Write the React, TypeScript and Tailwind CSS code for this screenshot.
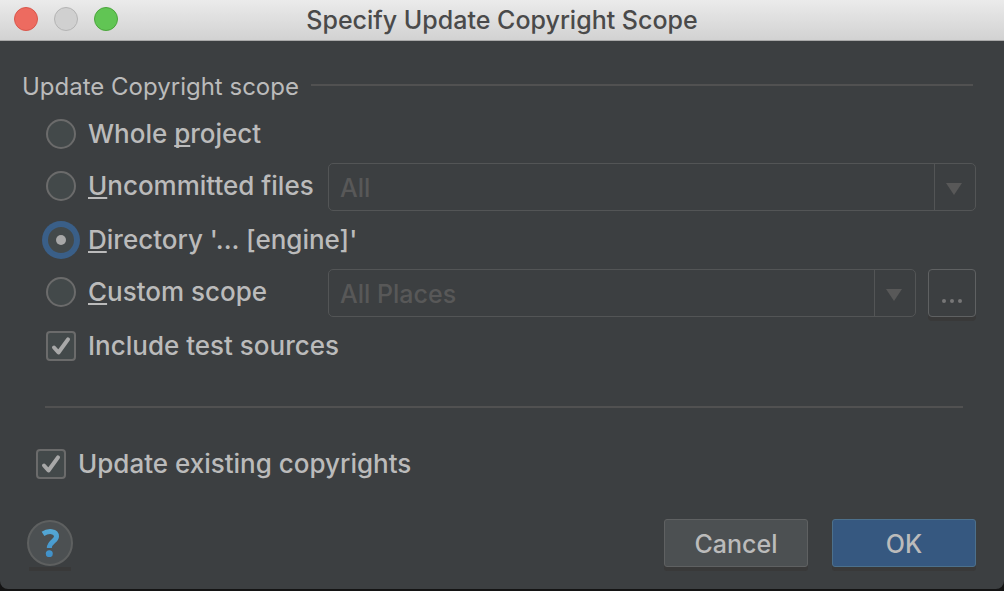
import { useState, type ReactNode } from "react";

const BORDER = "border-[#5f6162]";

function Mnemonic({ children }: { children: ReactNode }) {
  return (
    <span className="underline decoration-2 underline-offset-2 [text-decoration-skip-ink:none]">
      {children}
    </span>
  );
}

function ScopeRadio(props: {
  value: string;
  scope: string;
  onSelect: (value: string) => void;
  children: ReactNode;
}) {
  return (
    <label className="flex items-center gap-3 text-[26px] leading-[30px] font-medium">
      <input
        type="radio"
        name="scope"
        value={props.value}
        checked={props.scope === props.value}
        onChange={() => props.onSelect(props.value)}
        className="grid size-[30px] shrink-0 appearance-none place-items-center rounded-full border-2 border-[#6b6b6b] bg-[#43494a] outline-none before:size-2.5 before:rounded-full checked:border-[#3a5f88] checked:shadow-[0_0_0_4px_#3a5f88] checked:before:bg-[#a8a8a8]"
      />
      <span>{props.children}</span>
    </label>
  );
}

function CheckOption({ children }: { children: ReactNode }) {
  return (
    <label className="flex items-center gap-3 text-[26px] leading-[30px] font-medium">
      <span className="grid size-[30px] shrink-0">
        <input
          type="checkbox"
          defaultChecked
          className="peer col-start-1 row-start-1 size-[30px] appearance-none rounded border-2 border-[#6b6b6b] bg-[#43494a]"
        />
        <svg
          viewBox="0 0 30 30"
          aria-hidden="true"
          className="pointer-events-none invisible col-start-1 row-start-1 size-[30px] fill-none stroke-[#a8a8a8] peer-checked:visible"
        >
          <path d="M8 16.500 12.500 21.500 22 8.300" strokeWidth="4" strokeLinecap="round" strokeLinejoin="round" />
        </svg>
      </span>
      <span>{children}</span>
    </label>
  );
}

function ScopeSelect({ label, option }: { label: string; option: string }) {
  return (
    <div className="grid h-12 min-w-0 flex-1 grid-cols-[1fr_41px] rounded-[5px] border border-[#535556]">
      <select
        aria-label={label}
        disabled
        className="col-span-2 col-start-1 row-start-1 h-full w-full appearance-none bg-transparent px-[11px] pt-0.5 font-medium text-[#585858] opacity-100"
      >
        <option>{option}</option>
      </select>
      <span className="pointer-events-none col-start-2 row-start-1 grid place-items-center border-l border-[#535556] pt-1 pr-0.5">
        <svg viewBox="0 0 16 12" aria-hidden="true" className="h-3 w-4 fill-[#585858]">
          <path d="M0 0H16L8 12Z" />
        </svg>
      </span>
    </div>
  );
}

export default function App() {
  const [scope, setScope] = useState("directory");

  return (
    <div className="min-h-screen bg-[#141414] font-['Inter',sans-serif] text-[25px] leading-[30px] text-[#bbbbbb]">
      <div className="overflow-hidden rounded-b-lg bg-[#3c3f41]">
        <header className="grid h-[41px] grid-cols-[1fr_auto_1fr] items-center border-b border-[#a9a9a9] bg-linear-to-b from-[#ebebeb] to-[#d2d2d2] px-3.5">
          <div className="flex gap-4 pb-0.5">
            <button type="button" aria-label="Close" className="size-6 rounded-full border border-[#d9574c] bg-[#ed6b60]" />
            <button type="button" aria-label="Minimize" disabled className="size-6 rounded-full border border-[#b4b4b4] bg-[#d0d0d0]" />
            <button type="button" aria-label="Zoom" className="size-6 rounded-full border border-[#4ba53c] bg-[#61c554]" />
          </div>
          <h1 className="font-medium text-[#4a4a4a]">Specify Update Copyright Scope</h1>
        </header>

        <form className="pt-[31px] pb-[22px]" onSubmit={(event) => event.preventDefault()}>
          <fieldset>
            <legend className="flex w-full items-center gap-3 pr-[31px] pl-[22px]">
              <span className="text-[24px]">Update Copyright scope</span>
              <span className="mb-1 h-0.5 flex-1 bg-[#515151]" />
            </legend>
            <div className="flex flex-col gap-3.5 pt-[17px] pr-7 pl-[46px]">
              <ScopeRadio value="project" scope={scope} onSelect={setScope}>
                Whole <Mnemonic>p</Mnemonic>roject
              </ScopeRadio>
              <div className="flex items-center">
                <div className="w-[282px] shrink-0 pb-0.5">
                  <ScopeRadio value="uncommitted" scope={scope} onSelect={setScope}>
                    <Mnemonic>U</Mnemonic>ncommitted files
                  </ScopeRadio>
                </div>
                <ScopeSelect label="Uncommitted files" option="All" />
              </div>
              <ScopeRadio value="directory" scope={scope} onSelect={setScope}>
                <Mnemonic>D</Mnemonic>irectory '... [engine]'
              </ScopeRadio>
              <div className="flex items-center">
                <div className="w-[282px] shrink-0 pb-0.5">
                  <ScopeRadio value="custom" scope={scope} onSelect={setScope}>
                    <Mnemonic>C</Mnemonic>ustom scope
                  </ScopeRadio>
                </div>
                <ScopeSelect label="Custom scope" option="All Places" />
                <button
                  type="button"
                  aria-label="Edit scopes"
                  disabled
                  className={`ml-3 grid size-12 place-items-center rounded-[4px] border ${BORDER} pt-4 shadow-[0_4px_0_#393939]`}
                >
                  <svg viewBox="0 0 20 4" aria-hidden="true" className="h-1 w-5 fill-[#777777]">
                    <circle cx="2" cy="2" r="2" />
                    <circle cx="10" cy="2" r="2" />
                    <circle cx="18" cy="2" r="2" />
                  </svg>
                </button>
              </div>
              <CheckOption>Include test sources</CheckOption>
            </div>
          </fieldset>

          <hr className="mt-[45px] mr-[41px] mb-[41px] ml-[45px] h-0.5 border-0 bg-[#515151]" />

          <div className="px-9">
            <CheckOption>Update existing copyrights</CheckOption>
          </div>

          <footer className="mt-10 flex items-center gap-6 pr-7 pl-[27px]">
            <button
              type="button"
              aria-label="Help"
              className="relative mr-auto grid size-[46px] place-items-center rounded-full border-2 border-[#5e6060] bg-[#4c5052] after:absolute after:inset-x-0 after:top-[45px] after:h-1 after:bg-[#393939]"
            >
              <svg viewBox="0 0 18 28" aria-hidden="true" className="h-7 w-[18px]">
                <defs>
                  <linearGradient id="help" x1="0" y1="0" x2="0" y2="28" gradientUnits="userSpaceOnUse">
                    <stop offset="0" stopColor="#55a9d6" />
                    <stop offset="1" stopColor="#3f8fc8" />
                  </linearGradient>
                </defs>
                <path d="M2 4.800C7 1.500 15.500 1.500 15.500 7.500C15.500 12 8.500 12.500 8.300 19" fill="none" stroke="url(#help)" strokeWidth="5" />
                <circle cx="8.300" cy="24.700" r="3.500" fill="url(#help)" />
              </svg>
            </button>
            <button type="button" className={`h-12 w-36 rounded-[3px] border ${BORDER} bg-[#4c5052] pt-0.5 font-medium shadow-[0_4px_0_#393939]`}>
              Cancel
            </button>
            <button type="submit" className="h-12 w-36 rounded-[3px] border border-[#4c708c] bg-[#365880] pt-0.5 font-medium shadow-[0_4px_0_#393939]">
              OK
            </button>
          </footer>
        </form>
      </div>
    </div>
  );
}
